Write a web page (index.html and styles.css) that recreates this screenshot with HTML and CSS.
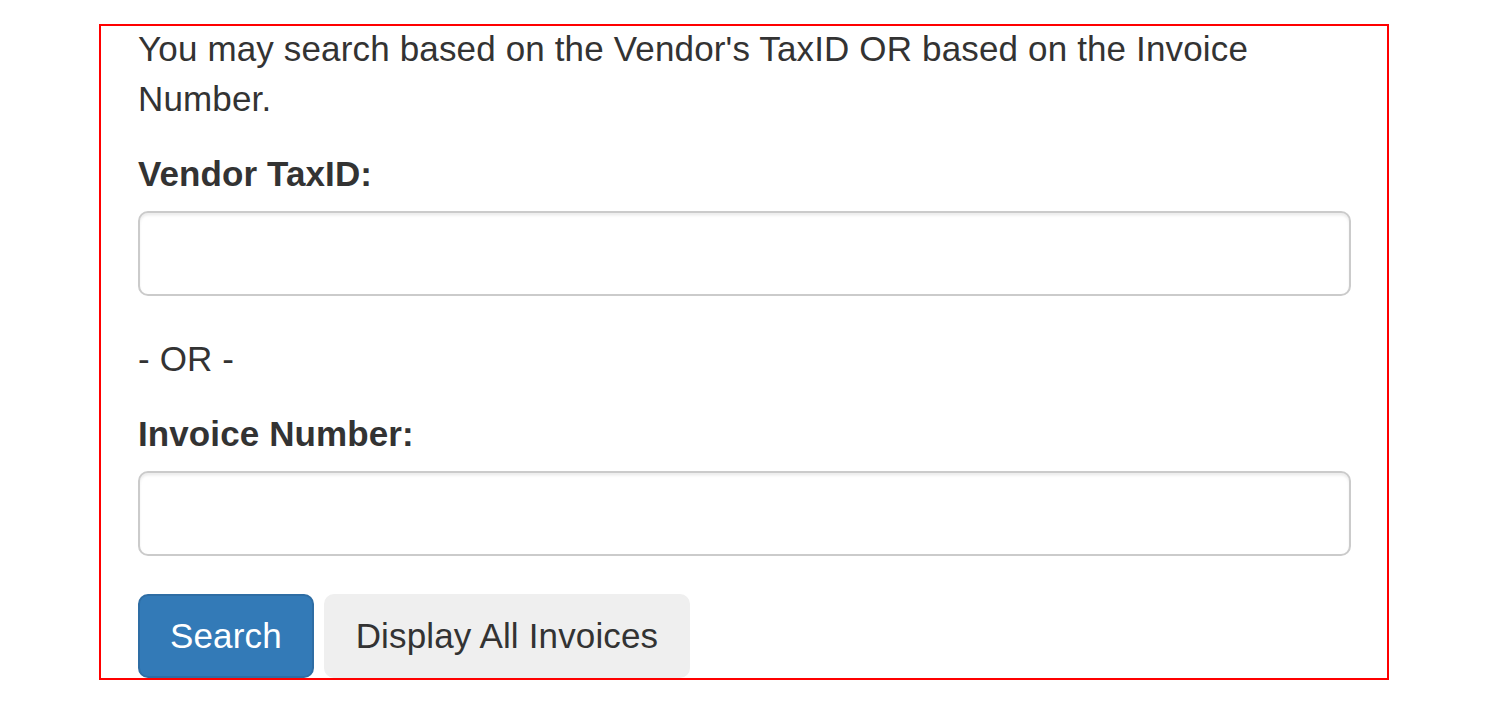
FILE: index.html
```html
<!DOCTYPE html>
<html lang="en">
<head>
<meta charset="utf-8">
<title>Invoice Search</title>
<link rel="stylesheet" href="styles.css">
</head>
<body>
<form class="panel">
  <p class="intro">You may search based on the Vendor's TaxID OR based on the Invoice Number.</p>
  <div class="form-group">
    <label class="label" for="taxid">Vendor TaxID:</label>
    <input class="input" id="taxid" type="text">
  </div>
  <p class="or">- OR -</p>
  <div class="form-group">
    <label class="label" for="invoice">Invoice Number:</label>
    <input class="input" id="invoice" type="text">
  </div>
  <div class="actions"><button class="btn btn-primary" type="button">Search</button> <button class="btn btn-default" type="button">Display All Invoices</button></div>
</form>
</body>
</html>
```

FILE: styles.css
```css
html, body {
  margin: 0;
  padding: 0;
  background: #fff;
}
body {
  font-family: "Liberation Sans", Arial, Helvetica, sans-serif;
  font-size: 35px;
  line-height: 50px;
  color: #333;
  letter-spacing: 0.15px;
}
.panel {
  box-sizing: border-box;
  width: 1289.5px;
  height: 656px;
  margin: 24px 0 0 99px;
  border: 2.5px solid #ff0000;
  padding: 0 36px 0 37px;
}
.intro {
  margin: -2.5px 0 25px;
}
.or {
  margin: 0 0 25px;
}
.form-group {
  margin-bottom: 37.5px;
}
.label {
  display: inline-block;
  font-weight: bold;
  letter-spacing: 0.1px;
  margin-bottom: 12.5px;
}
.input {
  display: block;
  box-sizing: border-box;
  width: 100%;
  height: 85px;
  margin: 0;
  padding: 15px 30px;
  font: inherit;
  color: #555;
  background: #fff;
  border: 2.5px solid #cbcbcb;
  border-radius: 10px;
  box-shadow: inset 0 2.5px 2.5px rgba(0, 0, 0, 0.075);
  outline: none;
}
.actions {
  white-space: nowrap;
}
.btn {
  display: inline-block;
  box-sizing: border-box;
  height: 84px;
  margin: 0;
  padding: 14.5px 30px;
  font: inherit;
  line-height: 50px;
  letter-spacing: 0.15px;
  vertical-align: top;
  border: 2.5px solid transparent;
  border-radius: 10px;
  cursor: pointer;
}
.btn-primary {
  color: #fff;
  background: #337ab7;
  border-color: #2e6da4;
}
.btn-default {
  color: #333;
  background: #efefef;
  border-color: #efefef;
}
```
